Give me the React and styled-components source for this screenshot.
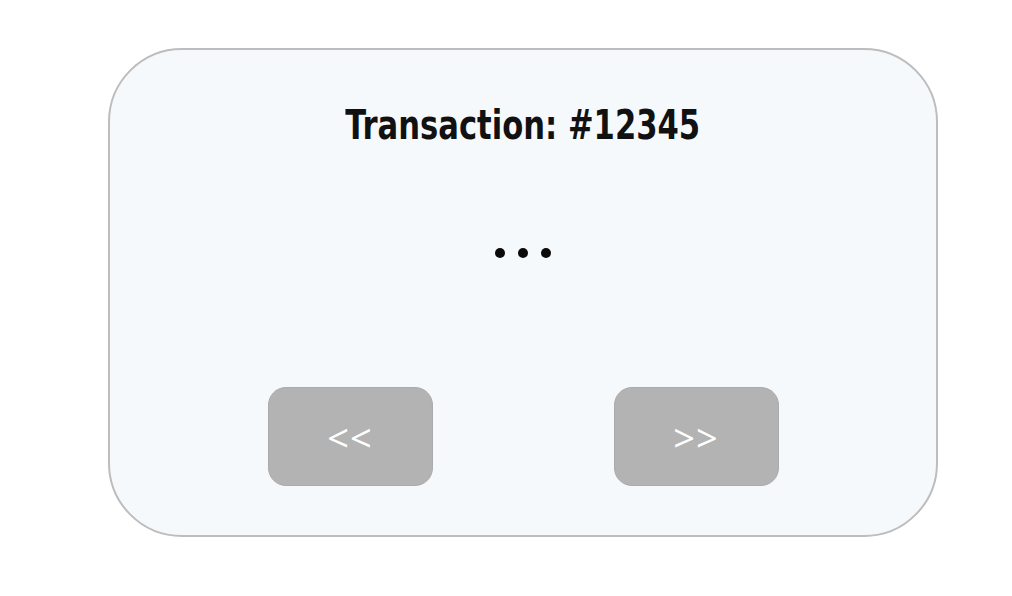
import React from "react"
import styled, { createGlobalStyle } from "styled-components"

const GlobalStyle = createGlobalStyle`
  html, body {
    margin: 0;
    padding: 0;
    background: #ffffff;
  }
  body {
    font-family: "DejaVu Sans Condensed", "Liberation Sans", sans-serif;
  }
`

const Page = styled.div`
  width: 1012px;
  height: 596px;
  padding: 48px 0 0 108px;
  box-sizing: border-box;
`

const Card = styled.div`
  width: 830px;
  height: 489px;
  box-sizing: border-box;
  border: 2px solid #bdbdbd;
  border-radius: 74px;
  background: #f6f9fc;
  display: flex;
  flex-direction: column;
  align-items: center;
  padding-top: 52px;
`

// the reference face is narrower than any installed one, so squeeze it
const Title = styled.h1`
  margin: 0;
  font-size: 41px;
  line-height: 46px;
  font-weight: 700;
  color: #111;
  white-space: nowrap;
  transform: scaleX(0.83);
`

const Dots = styled.div`
  margin-top: 100px;
  display: flex;
  gap: 13px;
`

const Dot = styled.span`
  width: 10px;
  height: 10px;
  border-radius: 50%;
  background: #0a0a0a;
`

const Controls = styled.div`
  margin-top: 129px;
  display: flex;
  gap: 181px;
`

const NavButton = styled.button`
  width: 165px;
  height: 99px;
  border: 1px solid #ababab;
  border-radius: 18px;
  background: #b3b3b3;
  color: #ffffff;
  font-family: "Open Sans", "Liberation Sans", sans-serif;
  font-size: 38px;
  font-weight: 400;
  letter-spacing: 1px;
  cursor: pointer;
  display: flex;
  align-items: center;
  justify-content: center;
  padding: 0;
`

export default function App() {
  return (
    <>
      <GlobalStyle />
      <Page>
        <Card>
          <Title>Transaction: #12345</Title>
          <Dots>
            <Dot />
            <Dot />
            <Dot />
          </Dots>
          <Controls>
            <NavButton>&lt;&lt;</NavButton>
            <NavButton>&gt;&gt;</NavButton>
          </Controls>
        </Card>
      </Page>
    </>
  )
}
